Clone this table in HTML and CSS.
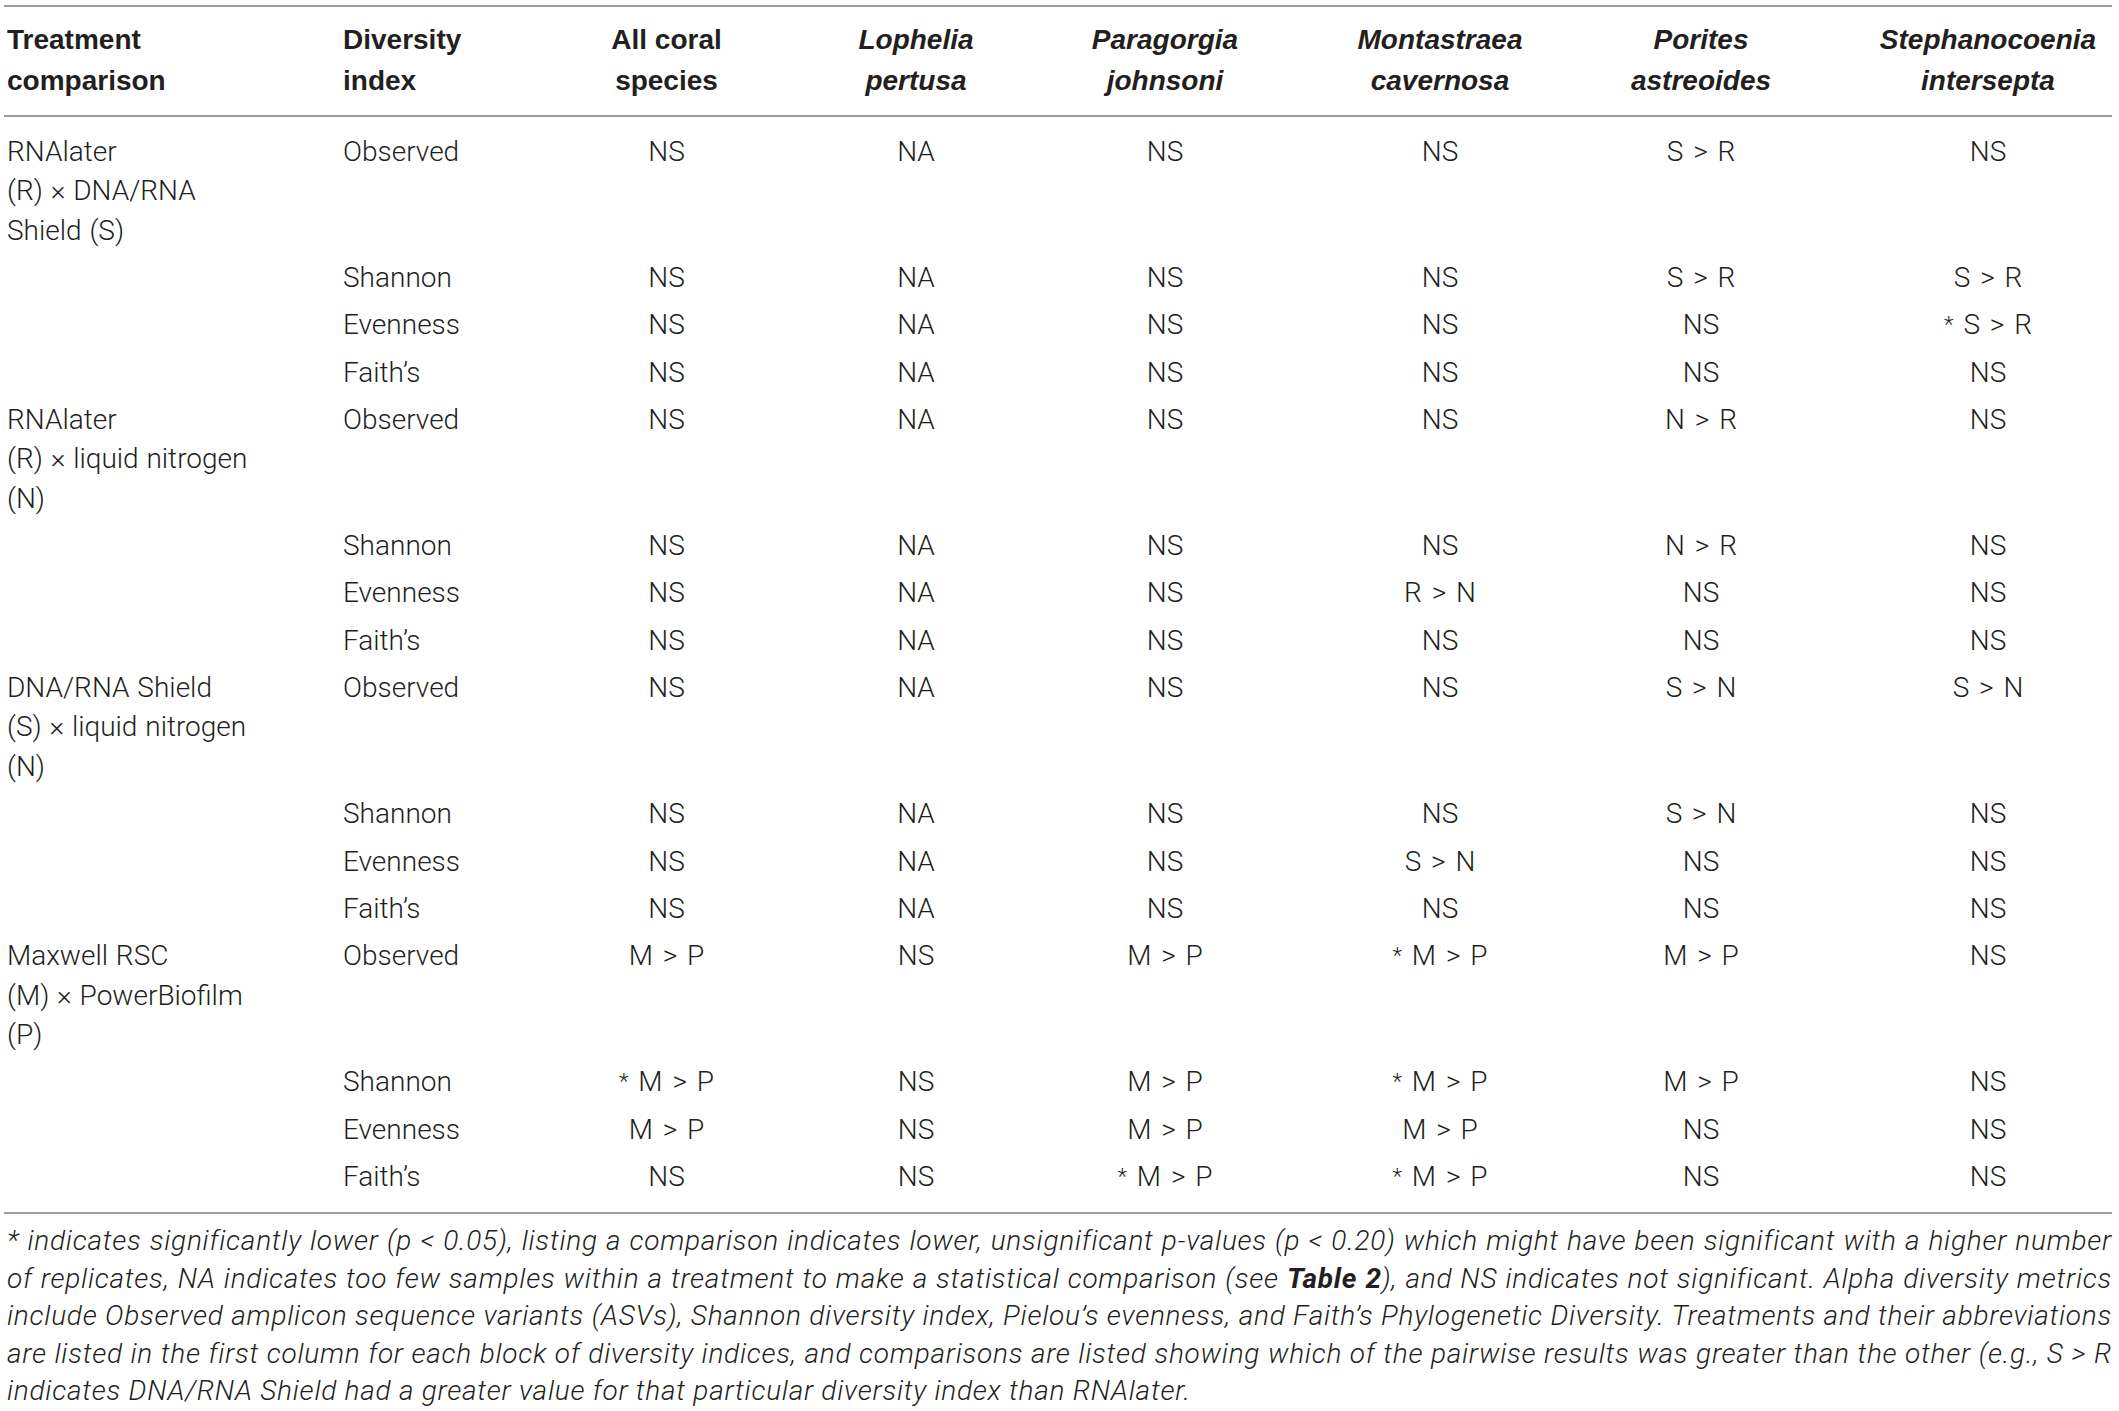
FILE: index.html
```html
<!DOCTYPE html>
<html lang="en">
<head>
<meta charset="utf-8">
<title>Alpha diversity comparisons</title>
<link rel="stylesheet" href="styles.css">
</head>
<body>
<div class="page">
<table class="data">
  <colgroup>
    <col class="c1"><col class="c2"><col class="c3"><col class="c4"><col class="c5"><col class="c6"><col class="c7"><col class="c8">
  </colgroup>
  <thead>
    <tr>
      <th class="left">Treatment<br>comparison</th>
      <th class="left">Diversity<br>index</th>
      <th>All coral<br>species</th>
      <th><i>Lophelia<br>pertusa</i></th>
      <th><i>Paragorgia<br>johnsoni</i></th>
      <th><i>Montastraea<br>cavernosa</i></th>
      <th><i>Porites<br>astreoides</i></th>
      <th><i>Stephanocoenia<br>intersepta</i></th>
    </tr>
  </thead>
  <tbody>
    <tr class="first">
      <td class="left">RNAlater<br>(R) × DNA/RNA<br>Shield (S)</td>
      <td class="left">Observed</td><td>NS</td><td>NA</td><td>NS</td><td>NS</td><td>S &gt; R</td><td>NS</td>
    </tr>
    <tr>
      <td></td><td class="left">Shannon</td><td>NS</td><td>NA</td><td>NS</td><td>NS</td><td>S &gt; R</td><td>S &gt; R</td>
    </tr>
    <tr>
      <td></td><td class="left">Evenness</td><td>NS</td><td>NA</td><td>NS</td><td>NS</td><td>NS</td><td><span class="ast">*</span> S &gt; R</td>
    </tr>
    <tr>
      <td></td><td class="left">Faith’s</td><td>NS</td><td>NA</td><td>NS</td><td>NS</td><td>NS</td><td>NS</td>
    </tr>
    <tr>
      <td class="left">RNAlater<br>(R) × liquid nitrogen<br>(N)</td>
      <td class="left">Observed</td><td>NS</td><td>NA</td><td>NS</td><td>NS</td><td>N &gt; R</td><td>NS</td>
    </tr>
    <tr>
      <td></td><td class="left">Shannon</td><td>NS</td><td>NA</td><td>NS</td><td>NS</td><td>N &gt; R</td><td>NS</td>
    </tr>
    <tr>
      <td></td><td class="left">Evenness</td><td>NS</td><td>NA</td><td>NS</td><td>R &gt; N</td><td>NS</td><td>NS</td>
    </tr>
    <tr>
      <td></td><td class="left">Faith’s</td><td>NS</td><td>NA</td><td>NS</td><td>NS</td><td>NS</td><td>NS</td>
    </tr>
    <tr>
      <td class="left">DNA/RNA Shield<br>(S) × liquid nitrogen<br>(N)</td>
      <td class="left">Observed</td><td>NS</td><td>NA</td><td>NS</td><td>NS</td><td>S &gt; N</td><td>S &gt; N</td>
    </tr>
    <tr>
      <td></td><td class="left">Shannon</td><td>NS</td><td>NA</td><td>NS</td><td>NS</td><td>S &gt; N</td><td>NS</td>
    </tr>
    <tr>
      <td></td><td class="left">Evenness</td><td>NS</td><td>NA</td><td>NS</td><td>S &gt; N</td><td>NS</td><td>NS</td>
    </tr>
    <tr>
      <td></td><td class="left">Faith’s</td><td>NS</td><td>NA</td><td>NS</td><td>NS</td><td>NS</td><td>NS</td>
    </tr>
    <tr>
      <td class="left">Maxwell RSC<br>(M) × PowerBiofilm<br>(P)</td>
      <td class="left">Observed</td><td>M &gt; P</td><td>NS</td><td>M &gt; P</td><td><span class="ast">*</span> M &gt; P</td><td>M &gt; P</td><td>NS</td>
    </tr>
    <tr>
      <td></td><td class="left">Shannon</td><td><span class="ast">*</span> M &gt; P</td><td>NS</td><td>M &gt; P</td><td><span class="ast">*</span> M &gt; P</td><td>M &gt; P</td><td>NS</td>
    </tr>
    <tr>
      <td></td><td class="left">Evenness</td><td>M &gt; P</td><td>NS</td><td>M &gt; P</td><td>M &gt; P</td><td>NS</td><td>NS</td>
    </tr>
    <tr class="last">
      <td></td><td class="left">Faith’s</td><td>NS</td><td>NS</td><td><span class="ast">*</span> M &gt; P</td><td><span class="ast">*</span> M &gt; P</td><td>NS</td><td>NS</td>
    </tr>
  </tbody>
</table>
<p class="note">* indicates significantly lower (p &lt; 0.05), listing a comparison indicates lower, unsignificant p-values (p &lt; 0.20) which might have been significant with a higher number of replicates, NA indicates too few samples within a treatment to make a statistical comparison (see <b>Table 2</b>), and NS indicates not significant. Alpha diversity metrics include Observed amplicon sequence variants (ASVs), Shannon diversity index, Pielou’s evenness, and Faith’s Phylogenetic Diversity. Treatments and their abbreviations are listed in the first column for each block of diversity indices, and comparisons are listed showing which of the pairwise results was greater than the other (e.g., S &gt; R indicates DNA/RNA Shield had a greater value for that particular diversity index than RNAlater.</p>
</div>
</body>
</html>
```

FILE: styles.css
```css
html, body {
  margin: 0;
  padding: 0;
  background: #ffffff;
}

.page {
  padding: 5px 7px 0 4px;
  color: #231f20;
  font-family: "Roboto", "Liberation Sans", sans-serif;
}

.data {
  width: 2108px;
  table-layout: fixed;
  border-collapse: collapse;
  font-size: 28px;
  font-weight: 300;
}

.c1 { width: 336px; }
.c2 { width: 149px; }
.c3 { width: 355px; }
.c4 { width: 144px; }
.c5 { width: 354px; }
.c6 { width: 196px; }
.c7 { width: 326px; }
.c8 { width: 248px; }

.data thead tr {
  border-top: 2px solid #9d9d9d;
  border-bottom: 2px solid #9d9d9d;
}

.data th {
  font-family: "Liberation Sans", "Roboto", sans-serif;
  font-weight: 700;
  line-height: 40.5px;
  padding: 13px 0 14px;
  text-align: center;
  white-space: nowrap;
  vertical-align: top;
}

.data th i {
  font-style: italic;
}

.data td {
  line-height: 39.5px;
  padding: 3.9px 0;
  text-align: center;
  vertical-align: top;
  white-space: nowrap;
  word-spacing: 3px;
}

.data .left {
  text-align: left;
  padding-left: 3px;
  word-spacing: 1px;
}

.data tr.first td {
  padding-top: 14.5px;
}

.data tr.last td {
  padding-bottom: 15px;
}

.data tbody tr.last {
  border-bottom: 2px solid #9d9d9d;
}

.ast {
  font-size: 0.8em;
  vertical-align: 0.1em;
}

.note {
  margin: 8px 0 0 3px;
  width: 2105px;
  font-size: 28px;
  font-style: italic;
  font-weight: 300;
  line-height: 37.6px;
  letter-spacing: 0.75px;
  text-align: justify;
}

.note b {
  font-weight: 700;
}
```
